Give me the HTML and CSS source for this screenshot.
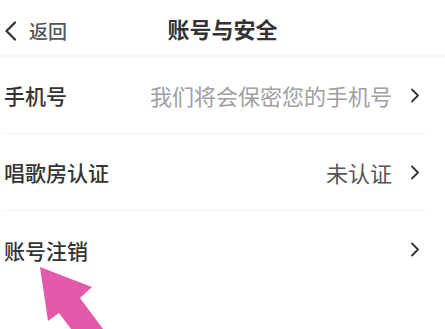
FILE: index.html
```html
<!DOCTYPE html>
<html lang="zh-CN">
<head>
<meta charset="utf-8">
<title>账号与安全</title>
<link rel="stylesheet" href="styles.css">
</head>
<body>
<div class="page">
  <header class="topbar">
    <div class="back">
      <svg class="back-icon" width="13" height="20" viewBox="0 0 13 20"><path d="M11 1.5 L2.5 10 L11 18.5" fill="none" stroke="#333" stroke-width="2.3" stroke-linecap="round" stroke-linejoin="round"/></svg>
      <span class="back-text">返回</span>
    </div>
    <h1 class="title">账号与安全</h1>
  </header>
  <ul class="list">
    <li class="row">
      <span class="label">手机号</span>
      <span class="value muted">我们将会保密您的手机号</span>
      <svg class="chev" width="10" height="15" viewBox="0 0 10 15"><path d="M2 1.5 L8 7.5 L2 13.5" fill="none" stroke="#333" stroke-width="1.8" stroke-linecap="round" stroke-linejoin="round"/></svg>
    </li>
    <li class="row">
      <span class="label">唱歌房认证</span>
      <span class="value">未认证</span>
      <svg class="chev" width="10" height="15" viewBox="0 0 10 15"><path d="M2 1.5 L8 7.5 L2 13.5" fill="none" stroke="#333" stroke-width="1.8" stroke-linecap="round" stroke-linejoin="round"/></svg>
    </li>
    <li class="row last">
      <span class="label">账号注销</span>
      <span class="value"></span>
      <svg class="chev" width="10" height="15" viewBox="0 0 10 15"><path d="M2 1.5 L8 7.5 L2 13.5" fill="none" stroke="#333" stroke-width="1.8" stroke-linecap="round" stroke-linejoin="round"/></svg>
    </li>
  </ul>
  <svg class="pointer" width="445" height="329" viewBox="0 0 445 329">
    <polygon points="40,267 92,287 80,298 106,333 74,333 59,313 48,321" fill="#e25aa9"/>
  </svg>
</div>
</body>
</html>
```

FILE: styles.css
```css
* { box-sizing: border-box; }
html, body {
  margin: 0;
  padding: 0;
  background: #ffffff;
}
body {
  font-family: "Noto Sans CJK SC", "Noto Sans", sans-serif;
  color: #333;
}
.page {
  position: relative;
  width: 445px;
  height: 329px;
  overflow: hidden;
}
.topbar {
  position: relative;
  height: 57px;
  display: flex;
  align-items: center;
  border-bottom: 2px solid #f7f7f7;
}
.back {
  display: flex;
  align-items: center;
  gap: 12px;
  padding-left: 4px;
  padding-top: 6px;
}
.back-text {
  font-size: 19px;
  color: #555;
  font-weight: 500;
}
.title {
  position: absolute;
  left: 0;
  right: 0;
  top: 0;
  margin: 0;
  text-align: center;
  font-size: 22px;
  font-weight: 700;
  line-height: 56px;
  padding-bottom: 6px;
  color: #333;
}
.list {
  list-style: none;
  margin: 0;
  padding: 0 19px 0 4px;
}
.row {
  height: 77px;
  display: flex;
  align-items: center;
  border-bottom: 1.5px solid #f3f3f3;
}
.row.last { border-bottom: none; }
.label {
  font-size: 21px;
  font-weight: 500;
  color: #333;
}
.value {
  margin-left: auto;
  font-size: 22px;
  color: #555;
}
.value.muted { color: #a0a0a0; }
.chev {
  margin-left: 18px;
  margin-right: 6px;
}
.pointer {
  position: absolute;
  left: 0;
  top: 0;
}
```
